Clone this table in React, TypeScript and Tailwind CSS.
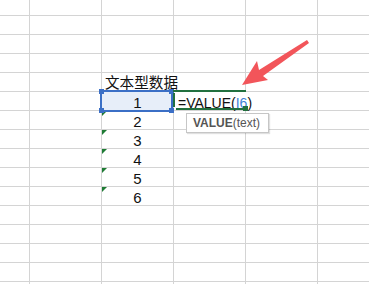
import React from "react";

const ROWS = 16;
const COLS = 6;

const numbers: Record<number, string> = { 6: "2", 7: "3", 8: "4", 9: "5", 10: "6" };

function Triangle() {
  return (
    <svg className="absolute left-0 top-0" width="5" height="5" viewBox="0 0 5 5">
      <polygon points="0,0 5,0 0,5" fill="#1e7b34" />
    </svg>
  );
}

function Handle({ pos }: { pos: string }) {
  return <div className={`absolute h-[5px] w-[5px] bg-[#3b6fc6] ${pos}`} />;
}

function Cell({ r, c }: { r: number; c: number }) {
  const base = "relative border-b border-[#d4d4d4] min-w-0";

  // header text spills over into the next column
  if (r === 4 && c === 2) {
    return (
      <div className={`${base} z-10`}>
        <div className="whitespace-nowrap pl-[3px] text-[14.6px] leading-[18px] text-[#111] font-['Noto_Sans_CJK_SC',sans-serif]">
          文本型数据
        </div>
      </div>
    );
  }

  // selected cell
  if (r === 5 && c === 2) {
    return (
      <div className={`${base} z-20 border-r bg-[#e7eef9]`}>
        <div className="pt-[2px] text-center text-[15px] leading-[18px] text-[#111]">1</div>
        <div className="pointer-events-none absolute -left-[2px] -top-[2px] h-[22px] w-[73px] border-2 border-[#3b6fc6]">
          <Handle pos="-left-[3px] -top-[3px]" />
          <Handle pos="-right-[3px] -top-[3px]" />
          <Handle pos="-left-[3px] -bottom-[3px]" />
          <Handle pos="-right-[3px] -bottom-[3px]" />
        </div>
      </div>
    );
  }

  // cell being edited
  if (r === 5 && c === 3) {
    return (
      <div className={`${base} z-30`}>
        <div className="whitespace-nowrap pl-[4px] pt-[2px] text-[14px] leading-[18px] text-[#111]">
          =VALUE(<span className="text-[#3e7fd6]">I6</span>)
        </div>
        <div className="pointer-events-none absolute -left-[1px] -top-[2px] h-[2px] w-[73px] bg-[#22703f]" />
        <div className="pointer-events-none absolute -left-[1px] top-[1px] h-[14px] w-[2px] bg-[#22703f]" />
        <div className="pointer-events-none absolute left-[2px] top-[16px] h-[2px] w-[68px] bg-[#22703f]" />
        <div className="pointer-events-none absolute left-[69px] top-[14px] h-[5px] w-[5px] bg-[#22703f]" />
        <div className="absolute left-[12px] top-[21px] flex h-[20px] w-[83px] items-center border border-[#c6c6c6] bg-white pl-[6px] text-[12px] text-[#555] shadow-[1px_1px_1px_rgba(0,0,0,0.12)]">
          <span className="font-bold">VALUE</span>
          <span>(text)</span>
        </div>
      </div>
    );
  }

  if (c === 2 && numbers[r]) {
    return (
      <div className={`${base} border-r`}>
        <Triangle />
        <div className="pt-[2px] text-center text-[15px] leading-[18px] text-[#111]">{numbers[r]}</div>
      </div>
    );
  }
  return <div className={`${base} border-r`} />;
}

export default function App() {
  return (
    <div className="relative h-[284px] w-[369px] overflow-hidden bg-white font-['Liberation_Sans',Arial,sans-serif]">
      <div className="grid grid-cols-[30px_72px_72px_72px_72px_72px] grid-rows-[16px_repeat(15,19px)]">
        {Array.from({ length: ROWS }).map((_, r) =>
          Array.from({ length: COLS }).map((_, c) => <Cell key={`${r}-${c}`} r={r} c={c} />)
        )}
      </div>

      {/* annotation arrow */}
      <svg className="pointer-events-none absolute left-0 top-0 z-40" width="369" height="284" viewBox="0 0 369 284">
        <polygon points="242,85 257,61 259,70 307,40 309,43 263,76 268,80" fill="#f2555a" />
      </svg>
    </div>
  );
}
